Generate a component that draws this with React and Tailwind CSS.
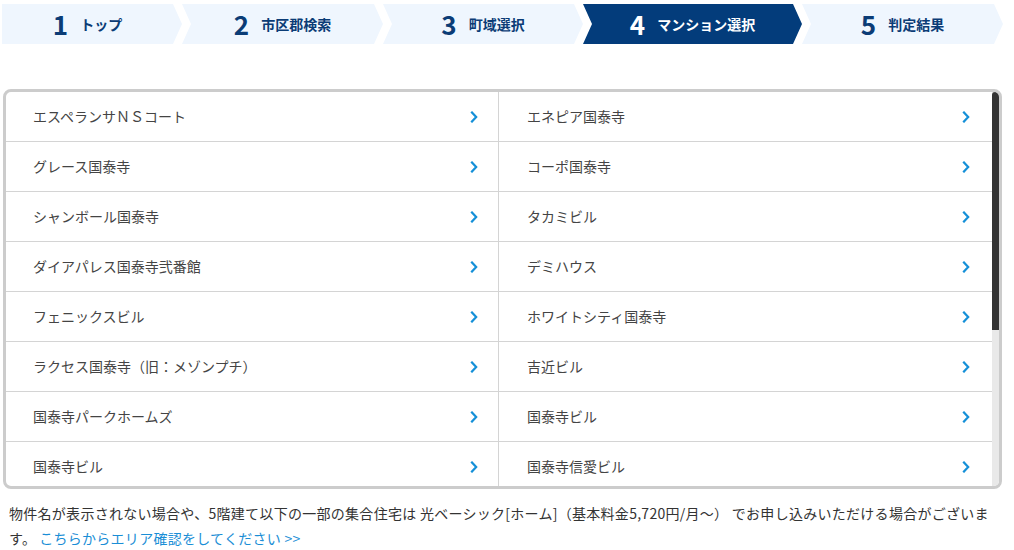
import React from "react";

const steps = [
  { no: 1, label: "トップ", width: "w-[180px]", first: true },
  { no: 2, label: "市区郡検索", width: "w-[201px]" },
  { no: 3, label: "町域選択", width: "w-[200px]" },
  { no: 4, label: "マンション選択", width: "w-[219px]", current: true },
  { no: 5, label: "判定結果", width: "w-[201px]" },
];

const mansions = [
  "エスペランサＮＳコート",
  "エネピア国泰寺",
  "グレース国泰寺",
  "コーポ国泰寺",
  "シャンボール国泰寺",
  "タカミビル",
  "ダイアパレス国泰寺弐番館",
  "デミハウス",
  "フェニックスビル",
  "ホワイトシティ国泰寺",
  "ラクセス国泰寺（旧：メゾンプチ）",
  "吉近ビル",
  "国泰寺パークホームズ",
  "国泰寺ビル",
  "国泰寺ビル",
  "国泰寺信愛ビル",
  "国泰寺第一ビル",
  "国泰寺ハイツ",
  "国泰寺マンション",
  "国泰寺町ビル",
  "平和ビル",
  "メゾン国泰寺",
  "ライオンズマンション国泰寺",
  "サンライズ国泰寺",
  "プレジール国泰寺",
  "パークサイド国泰寺",
];

function Chevron() {
  return (
    <svg width="8" height="12" viewBox="0 0 8 12" className="shrink-0">
      <path
        d="M2 1.5 L6.2 6 L2 10.5"
        fill="none"
        stroke="#1590d8"
        strokeWidth="2.2"
        strokeLinecap="square"
      />
    </svg>
  );
}

function StepBar() {
  return (
    <div className="flex h-[40px] mt-[4px] ml-[2px]">
      {steps.map((step) => (
        <div
          key={step.no}
          className={`${step.width} flex items-center justify-center gap-[12px] ${
            step.first
              ? "pr-[9px] [clip-path:polygon(0_0,calc(100%_-_9px)_0,100%_50%,calc(100%_-_9px)_100%,0_100%)]"
              : "px-[9px] [clip-path:polygon(0_0,calc(100%_-_9px)_0,100%_50%,calc(100%_-_9px)_100%,0_100%,9px_50%)]"
          } ${step.current ? "bg-[#033c7b] text-white" : "bg-[#eff6fe] text-[#0b3c76]"}`}
        >
          <span className="text-[26px] font-bold leading-none">{step.no}</span>
          <span className="text-[14px] font-bold leading-none">{step.label}</span>
        </div>
      ))}
    </div>
  );
}

export default function App() {
  return (
    <div className="w-[1014px] h-[550px] bg-white overflow-hidden font-['Noto_Sans_CJK_JP','Noto_Sans',sans-serif]">
      <StepBar />

      <div className="mt-[45px] ml-[3px] w-[999px] h-[400px] border-[3px] border-[#cccccc] rounded-[8px] overflow-hidden flex">
        <ul className="flex-1 overflow-hidden grid grid-cols-2 content-start">
          {mansions.map((name, idx) => (
            <li
              key={idx}
              className={`h-[50px] flex items-center justify-between border-b border-[#d4d4d4] text-[14px] text-[#444444] ${
                idx % 2 === 0 ? "border-r pl-[27px] pr-[20px]" : "pl-[28px] pr-[22px]"
              }`}
            >
              <span>{name}</span>
              <Chevron />
            </li>
          ))}
        </ul>
        {/* scrollbar */}
        <div className="w-[7px] bg-[#e9e9e9] flex flex-col">
          <div className="h-[238px] bg-[#333333] rounded-t-[3px]" />
        </div>
      </div>

      <p className="mt-[12px] ml-[9px] mr-[14px] text-[14px] leading-[25px] tracking-[0.28px] text-[#333333]">
        物件名が表示されない場合や、5階建て以下の一部の集合住宅は
        光ベーシック[ホーム]（基本料金5,720円/月～）
        でお申し込みいただける場合がございます。
        <a href="#" className="ml-[3px] text-[#1a8ed6]">
          こちらからエリア確認をしてください &gt;&gt;
        </a>
      </p>
    </div>
  );
}
